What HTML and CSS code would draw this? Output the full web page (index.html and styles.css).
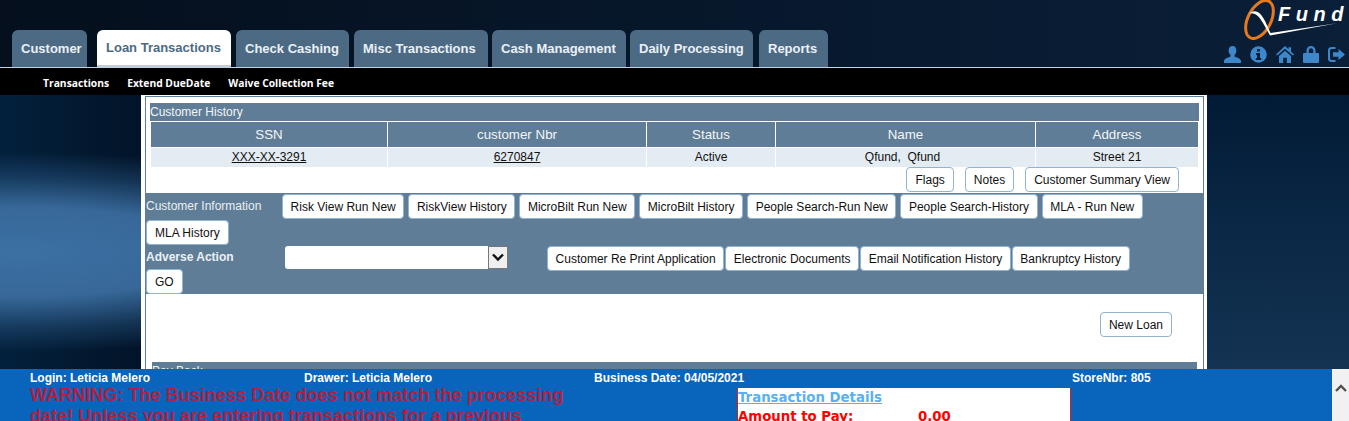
FILE: index.html
```html
<!DOCTYPE html>
<html lang="en">
<head>
<meta charset="utf-8">
<title>QFund - Loan Transactions</title>
<link rel="stylesheet" href="styles.css">
</head>
<body>
<header class="top">
  <nav class="tabs">
    <a class="tab t-customer">Customer</a>
    <a class="tab tab-active t-loan">Loan Transactions</a>
    <a class="tab t-check">Check Cashing</a>
    <a class="tab t-misc">Misc Transactions</a>
    <a class="tab t-cash">Cash Management</a>
    <a class="tab t-daily">Daily Processing</a>
    <a class="tab t-reports">Reports</a>
  </nav>
  <div class="brand">
    <svg class="logo" width="109" height="40" viewBox="0 0 109 40">
      <ellipse cx="19.500" cy="19.500" rx="11.500" ry="20.500" transform="rotate(27 19.500 19.500)" fill="none" stroke="#e8791a" stroke-width="3"/>
      <path d="M9 13.500 C16 8 21 13 25 21 L30.500 33 L97 23.200 L30 35.500 L23 23 C19 16 15 12 9 13.500 Z" fill="#fff"/>
      <text class="logo-text" x="38" y="21">Fund</text>
    </svg>
    <div class="icons">
      <svg width="17" height="17" viewBox="0 0 17 17"><path d="M8.500 0C6 0 4.600 2 4.600 4.400C4.600 6.500 5.600 8 6.500 9L6.500 10.500C4 11.800 0 12.500 0 15L0 17L17 17L17 15C17 12.500 13 11.800 10.500 10.500L10.500 9C11.400 8 12.400 6.500 12.400 4.400C12.400 2 11 0 8.500 0Z"/></svg>
      <svg width="17" height="17" viewBox="0 0 17 17"><path fill-rule="evenodd" d="M8.500 0.200a8.300 8.300 0 1 0 0 16.600a8.300 8.300 0 1 0 0-16.600ZM7 3h3v2.600H7ZM6 7h4v5h1.200v2H5.800v-2H7V9H6Z"/></svg>
      <svg width="18" height="17" viewBox="0 0 18 17"><path d="M9 0L12.500 3.200V1.200H15V5.500L18 8.500L16.800 9.500L9 2.800L1.200 9.500L0 8.500ZM3 10L9 4.800L15 10V17H10.800V11.800H7.200V17H3Z"/></svg>
      <svg width="16" height="17" viewBox="0 0 16 17"><path fill-rule="evenodd" d="M3.500 7V4.500C3.500 1.800 5.500 0 8 0s4.500 1.800 4.500 4.500V7H15a1 1 0 0 1 1 1v8a1 1 0 0 1-1 1H1a1 1 0 0 1-1-1V8a1 1 0 0 1 1-1ZM5.800 7h4.400V4.600C10.200 3.200 9.200 2.300 8 2.300S5.800 3.200 5.800 4.600Z"/></svg>
      <svg width="17" height="17" viewBox="0 0 17 17"><path d="M7.500 1H3.500A3.500 3.500 0 0 0 0 4.500v8A3.500 3.500 0 0 0 3.500 16H7.500V14H3.800A1.800 1.800 0 0 1 2 12.200V4.800A1.800 1.800 0 0 1 3.800 3H7.500ZM10.500 3L17 8.500L10.500 14V10.800H5V6.200H10.500Z"/></svg>
    </div>
  </div>
</header>
<nav class="subnav">
  <a>Transactions</a>
  <a>Extend DueDate</a>
  <a>Waive Collection Fee</a>
</nav>
<main class="panel">
  <div class="panel-inner">
    <div class="section-title">Customer History</div>
    <table class="history">
      <colgroup>
        <col class="c1"><col class="c2"><col class="c3"><col class="c4"><col class="c5">
      </colgroup>
      <thead>
        <tr><th>SSN</th><th>customer Nbr</th><th>Status</th><th>Name</th><th>Address</th></tr>
      </thead>
      <tbody>
        <tr>
          <td><a class="ln">XXX-XX-3291</a></td>
          <td><a class="ln">6270847</a></td>
          <td>Active</td>
          <td class="cell-name">Qfund,&nbsp; Qfund</td>
          <td>Street 21</td>
        </tr>
      </tbody>
    </table>
    <div class="top-actions">
      <button class="btn">Flags</button>
      <button class="btn">Notes</button>
      <button class="btn">Customer Summary View</button>
    </div>
    <section class="band">
      <div class="band-row">
        <span class="band-label">Customer Information</span>
        <button class="btn btn-tight">Risk View Run New</button>
        <button class="btn btn-tight">RiskView History</button>
        <button class="btn btn-tight">MicroBilt Run New</button>
        <button class="btn btn-tight">MicroBilt History</button>
        <button class="btn btn-tight">People Search-Run New</button>
        <button class="btn btn-tight">People Search-History</button>
        <button class="btn btn-tight">MLA - Run New</button>
        <button class="btn">MLA History</button>
      </div>
      <div class="band-row band-row-2">
        <span class="band-label band-strong">Adverse Action</span>
        <span class="select"><span class="select-arrow"><svg width="14" height="9" viewBox="0 0 14 9"><path d="M2 1.500L7 6.500L12 1.500" fill="none" stroke="#111" stroke-width="2.400"/></svg></span></span>
        <button class="btn btn-tight btn-inline btn-print">Customer Re Print Application</button>
        <button class="btn btn-tight btn-inline">Electronic Documents</button>
        <button class="btn btn-tight btn-inline">Email Notification History</button>
        <button class="btn btn-tight btn-inline">Bankruptcy History</button>
        <button class="btn">GO</button>
      </div>
    </section>
    <div class="loan-row"><button class="btn">New Loan</button></div>
    <div class="section-title section-pay">Pay Back</div>
  </div>
</main>
<footer class="foot">
  <div class="foot-main">
    <div class="foot-info">
      <span class="fi-login">Login: Leticia Melero</span>
      <span class="fi-drawer">Drawer: Leticia Melero</span>
      <span class="fi-date">Business Date: 04/05/2021</span>
      <span>StoreNbr: 805</span>
    </div>
    <div class="foot-body">
      <p class="warning">WARNING: The Business Date does not match the processing date! Unless you are entering transactions for a previous</p>
      <div class="details">
        <a class="details-title">Transaction Details</a>
        <div class="details-row"><span class="details-key">Amount to Pay:</span><span>0.00</span></div>
      </div>
    </div>
  </div>
  <div class="scrollbar"><svg width="12" height="8" viewBox="0 0 12 8"><path d="M1 7L6 2L11 7" fill="none" stroke="#505050" stroke-width="2.400"/></svg></div>
</footer>
</body>
</html>
```
FILE: styles.css
```css
* { box-sizing: border-box; }
html, body { height: 421px; overflow: hidden; }
body {
  margin: 0;
  font-family: "Liberation Sans", Arial, sans-serif;
  font-size: 12px;
  color: #111;
  background:
    radial-gradient(ellipse 420px 100px at 20px 252px, rgba(60,112,163,1) 0%, rgba(58,108,158,.95) 45%, rgba(40,85,130,.5) 75%, rgba(20,50,85,0) 100%),
    linear-gradient(90deg, #03203c 0, #021428 141px, transparent 141px),
    linear-gradient(180deg, #021a35 95px, #0a2745 220px, #143252 369px);
}
a { color: inherit; }

.top {
  height: 68px;
  display: flex;
  justify-content: space-between;
  border-bottom: 1px solid #bfd3e6;
  background: linear-gradient(90deg, #050f1d 0%, #07182c 55%, #0a1f38 100%);
  padding-left: 12px;
}
.tabs { display: flex; align-items: flex-end; padding-top: 30px; }
.tab {
  height: 37px;
  padding-left: 9px;
  display: flex;
  align-items: center;
  background: #4d6a84;
  color: #eaf0f6;
  font-size: 13px;
  font-weight: 700;
  white-space: nowrap;
  border-radius: 6px 6px 0 0;
}
.tab-active { background: #fff; color: #4d6a84; border-bottom: 2px solid #c4ccd4; }
.t-customer { width: 75px; margin-right: 10px; }
.t-loan { width: 134px; margin-right: 5px; }
.t-check { width: 113px; margin-right: 5px; }
.t-misc { width: 134px; margin-right: 4px; }
.t-cash { width: 134px; margin-right: 4px; }
.t-daily { width: 123px; margin-right: 6px; }
.t-reports { width: 69px; }

.brand { width: 109px; display: flex; flex-direction: column; align-items: flex-end; }
.logo { display: block; flex: none; }
.logo-text { font-family: "Liberation Sans", sans-serif; font-size: 20px; font-style: italic; font-weight: 700; fill: #fff; letter-spacing: 5.500px; }
.icons { width: 121px; margin: 6px 4px 0 0; flex: none; display: flex; justify-content: space-between; fill: #3d87cb; }
.icons svg { display: block; flex: none; }

.subnav {
  height: 27px;
  background: #000;
  display: flex;
  align-items: center;
  gap: 18px;
  padding: 2px 0 0 43px;
  color: #fff;
  font-family: "Open Sans", sans-serif;
  font-size: 10.300px;
  font-weight: 700;
}

.panel {
  width: 1066px;
  margin-left: 141px;
  height: 330px;
  background: #fff;
  padding: 1px 3px 0 4px;
}
.panel-inner { border: 1px solid #5f7d96; border-bottom: 0; height: 100%; padding-top: 6px; }

.section-title {
  margin: 0 4px;
  height: 18px;
  background: #5f7d96;
  color: #f2f5f8;
  font-size: 12px;
  line-height: 18px;
}
.history {
  width: 1048px;
  margin-left: 4px;
  border-collapse: collapse;
  table-layout: fixed;
}
.c1 { width: 237px; } .c2 { width: 259px; } .c3 { width: 129px; } .c4 { width: 260px; } .c5 { width: 163px; }
.history th {
  height: 26px;
  background: #5f7d96;
  color: #f2f5f8;
  font-weight: 400;
  font-size: 13.330px;
  padding: 0 0 1px;
  border: 1px solid #fff;
}
.history td {
  height: 19px;
  background: #e4ecf3;
  text-align: center;
  padding: 0;
  border-left: 1px solid #fff;
  border-right: 1px solid #fff;
}
.history .cell-name { padding-right: 6px; }
.ln { text-decoration: underline; }

.btn {
  font-family: "Liberation Sans", Arial, sans-serif;
  font-size: 12px;
  color: #111;
  background: #fff;
  border: 1px solid #8fb4d4;
  border-radius: 4px;
  height: 25px;
  padding: 1px 8px 0;
  margin: 0;
  flex: none;
}
.btn-tight { padding: 1px 7.600px 0; }
.top-actions { display: flex; justify-content: flex-end; gap: 11px; height: 26px; padding-right: 24px; }

.band { background: #5f7d96; height: 101px; padding-top: 1px; }
.band-row { display: flex; flex-wrap: wrap; gap: 1px 4px; align-items: center; }
.band-label { width: 132px; color: #eaf0f5; font-size: 12px; white-space: nowrap; }
.band-strong { font-weight: 700; width: 138px; }
.band-row-2 { margin-top: 1px; gap: 0 1px; padding-right: 50px; }
.select {
  width: 223px;
  height: 23px;
  background: #fff;
  border-radius: 3px;
  display: flex;
  justify-content: flex-end;
}
.select-arrow {
  width: 20px;
  height: 23px;
  background: #efefef;
  border: 1px solid #777;
  display: flex;
  align-items: center;
  justify-content: center;
}
.btn-inline { margin-bottom: -2px; }
.btn-print { margin-left: 38px; }

.loan-row { display: flex; justify-content: flex-end; padding: 18px 31px 0 0; height: 68px; }
.section-pay { margin: 0 6px; }

.foot {
  position: fixed;
  left: 0;
  right: 0;
  bottom: 0;
  height: 52px;
  background: #0865bb;
  display: flex;
  overflow: hidden;
}
.foot-main { flex: 1; padding-left: 30px; min-width: 0; }
.foot-info { display: flex; color: #fff; font-weight: 700; font-size: 12px; height: 18px; line-height: 18px; }
.fi-login { width: 274px; }
.fi-drawer { width: 290px; }
.fi-date { width: 478px; }
.foot-body { display: flex; justify-content: space-between; padding-right: 261px; }
.warning {
  margin: -2px 0 0;
  width: 560px;
  color: #b51f3f;
  font-size: 18px;
  font-weight: 700;
  line-height: 21px;
  letter-spacing: .06px;
}
.details {
  width: 334px;
  height: 60px;
  background: #fff;
  border: 1px solid #d02020;
  font-family: "DejaVu Sans", Verdana, sans-serif;
  font-weight: 700;
  font-size: 13.300px;
}
.details-title { color: #5ab0f0; text-decoration: underline; display: block; line-height: 19px; }
.details-row { color: #f00; display: flex; margin-top: 2px; }
.details-key { width: 180px; }
.scrollbar {
  width: 17px;
  flex: none;
  background: #f1f1f1;
  display: flex;
  justify-content: center;
  padding-top: 15px;
}
```
